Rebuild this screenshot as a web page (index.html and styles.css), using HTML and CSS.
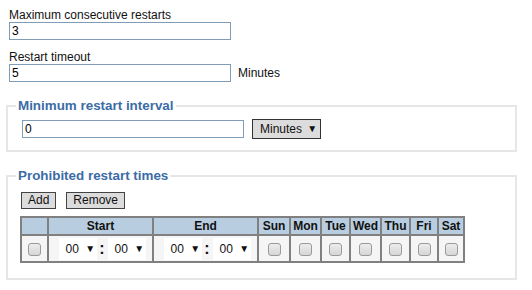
FILE: index.html
```html
<!DOCTYPE html>
<html lang="en">
<head>
    <meta charset="UTF-8">
    <title>Restart settings</title>
    <link rel="stylesheet" href="styles.css">
</head>
<body>
    <div class="page">
        <div class="field">
            <label class="label">Maximum consecutive restarts</label>
            <div class="row">
                <span class="text-input">3</span>
            </div>
        </div>
        <div class="field">
            <label class="label">Restart timeout</label>
            <div class="row">
                <span class="text-input">5</span>
                <span class="unit">Minutes</span>
            </div>
        </div>

        <fieldset class="group group-interval">
            <legend>Minimum restart interval</legend>
            <div class="row">
                <span class="text-input">0</span>
                <span class="dropdown">Minutes <span class="arrow">&#9660;</span></span>
            </div>
        </fieldset>

        <fieldset class="group group-times">
            <legend>Prohibited restart times</legend>
            <div class="toolbar">
                <span class="button">Add</span>
                <span class="button">Remove</span>
            </div>
            <table class="times">
                <colgroup>
                    <col class="c-check">
                    <col class="c-time">
                    <col class="c-time">
                    <col class="c-sun">
                    <col class="c-mon">
                    <col class="c-tue">
                    <col class="c-wed">
                    <col class="c-thu">
                    <col class="c-fri">
                    <col class="c-sat">
                </colgroup>
                <tr>
                    <th></th>
                    <th>Start</th>
                    <th>End</th>
                    <th>Sun</th>
                    <th>Mon</th>
                    <th>Tue</th>
                    <th>Wed</th>
                    <th>Thu</th>
                    <th>Fri</th>
                    <th>Sat</th>
                </tr>
                <tr>
                    <td><span class="check"></span></td>
                    <td>
                        <div class="time">
                            <span class="time-select">00 <span class="arrow">&#9660;</span></span>
                            <span class="colon">:</span>
                            <span class="time-select">00 <span class="arrow">&#9660;</span></span>
                        </div>
                    </td>
                    <td>
                        <div class="time">
                            <span class="time-select">00 <span class="arrow">&#9660;</span></span>
                            <span class="colon">:</span>
                            <span class="time-select">00 <span class="arrow">&#9660;</span></span>
                        </div>
                    </td>
                    <td><span class="check"></span></td>
                    <td><span class="check"></span></td>
                    <td><span class="check"></span></td>
                    <td><span class="check"></span></td>
                    <td><span class="check"></span></td>
                    <td><span class="check"></span></td>
                    <td><span class="check"></span></td>
                </tr>
            </table>
        </fieldset>
    </div>
</body>
</html>
```

FILE: styles.css
```css
body {
    margin: 0;
    font-family: 'Liberation Sans', Arial, sans-serif;
    font-size: 12px;
    color: #111;
    background: white;
}
.page {
    width: 511px;
    margin-left: 6px;
    padding-top: 8px;
}
.field {
    margin: 0 0 10px 3px;
}
.label {
    display: block;
    line-height: 14px;
}
.row {
    display: flex;
    align-items: center;
}
.text-input {
    box-sizing: border-box;
    width: 222px;
    height: 18px;
    line-height: 16px;
    padding: 0 2px;
    border: 1px solid #7f9db9;
    background: white;
    color: #000;
}
.unit {
    margin-left: 7px;
}
.group {
    margin: 16px 0 0 0;
    padding: 5px 10px 11px 12px;
    border: 2px solid #e6e6e6;
}
.group legend {
    margin-left: -4px;
    padding: 0 2px;
    font-size: 13.4px;
    font-weight: bold;
    color: #3b6ca6;
    line-height: 16px;
}
.group-interval .text-input {
    margin-left: 2px;
}
.dropdown {
    box-sizing: border-box;
    width: 69px;
    height: 20px;
    line-height: 18px;
    margin-left: 8px;
    padding: 0 0 0 7px;
    border: 1px solid #333;
    background: #dcdcdc;
    color: #111;
    white-space: nowrap;
}
.arrow {
    font-size: 10px;
    margin-left: 2px;
    vertical-align: 1px;
}
.group-times {
    margin-top: 16px;
    padding-top: 8px;
    padding-bottom: 15px;
}
.toolbar {
    display: flex;
    gap: 10px;
    margin: 0 0 7px 1px;
}
.button {
    box-sizing: border-box;
    height: 17px;
    line-height: 15px;
    padding: 0 6px;
    font-size: 12px;
    border: 1px solid #444;
    background: #dcdcdc;
}
.times {
    table-layout: fixed;
    width: 443px;
    border-collapse: separate;
    border-spacing: 0;
    border: 1px solid #808080;
}
.times th,
.times td {
    border: 1px solid #808080;
    padding: 0;
    text-align: center;
}
.times th {
    height: 16px;
    background: #b8cddf;
    font-weight: bold;
    font-size: 12px;
    color: #111;
}
.times td {
    height: 25px;
    background: #f5f5f5;
}
.c-check { width: 27px; }
.c-time { width: 105px; }
.c-sun { width: 32px; }
.c-mon { width: 31px; }
.c-tue { width: 29px; }
.c-wed { width: 31px; }
.c-thu { width: 29px; }
.c-fri { width: 28px; }
.c-sat { width: 26px; }
.check {
    display: inline-block;
    box-sizing: border-box;
    width: 13px;
    height: 13px;
    border: 1px solid #9a9a9a;
    border-radius: 3px;
    background: linear-gradient(#ececec, #d6d6d6);
    vertical-align: middle;
}
.time {
    display: flex;
    align-items: center;
    justify-content: center;
    padding-left: 3px;
}
.time-select {
    box-sizing: border-box;
    width: 38px;
    height: 22px;
    line-height: 22px;
    padding-left: 7px;
    text-align: left;
    background: white;
    font-size: 12px;
    white-space: nowrap;
}
.time-select .arrow {
    margin-left: 3px;
}
.colon {
    width: 11px;
    font-size: 16px;
    font-weight: bold;
    line-height: 22px;
    vertical-align: 2px;
}
```
